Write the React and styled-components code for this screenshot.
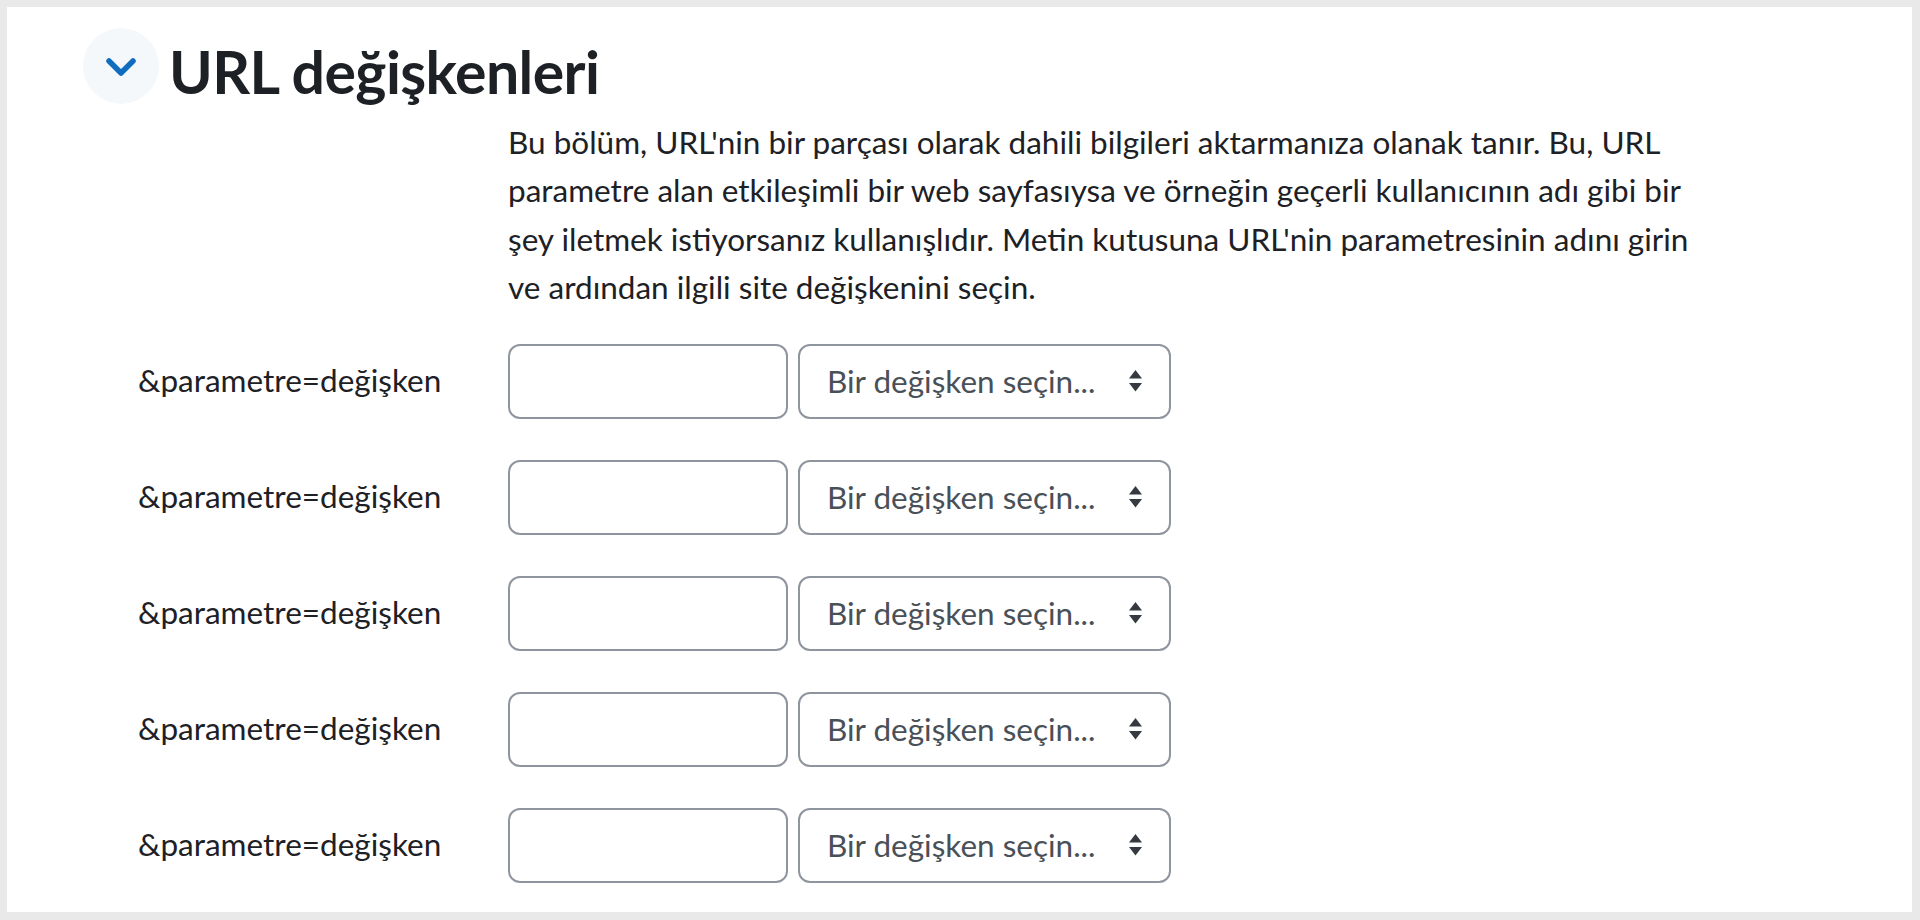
import React from "react";
import styled, { createGlobalStyle } from "styled-components";

const Global = createGlobalStyle`
  html, body { margin: 0; padding: 0; background: #e9e9e9; }
  body { font-family: Lato, "Open Sans", sans-serif; color: #1d2125; }
  * { box-sizing: border-box; }
`;

const Page = styled.div`
  width: 1920px;
  height: 920px;
  padding: 7px 8px 8px 7px;
`;

const Card = styled.section`
  background: #ffffff;
  height: 905px;
  padding: 21px 0 0 76px;
  display: flex;
  flex-direction: column;
`;

const Header = styled.div`
  display: flex;
  align-items: center;
  gap: 10px;
  height: 75px;
`;

const Toggle = styled.button`
  width: 76px;
  height: 76px;
  border-radius: 50%;
  border: none;
  background: #f5f8fb;
  display: flex;
  align-items: center;
  justify-content: center;
  padding: 0;
  padding-top: 4px;
`;

const Title = styled.h3`
  margin: 0;
  font-family: Lato, "Open Sans", sans-serif;
  font-weight: 700;
  font-size: 59px;
  line-height: 1;
  letter-spacing: -0.6px;
  color: #1d2125;
  padding-top: 12px;
`;

const Body = styled.div`
  display: grid;
  grid-template-columns: 370px auto;
  margin-left: 55px;
  margin-top: 15px;
  row-gap: 41px;
  align-items: center;
`;

const Description = styled.p`
  grid-column: 2;
  margin: 0 0 -9px 0;
  font-size: 31.5px;
  line-height: 48.4px;
  color: #1d2125;
  white-space: nowrap;
`;

const Label = styled.label`
  grid-column: 1;
  font-size: 31.5px;
  line-height: 48px;
  color: #1d2125;
  padding-bottom: 2px;
`;

const Controls = styled.div`
  grid-column: 2;
  display: flex;
  gap: 10px;
`;

const TextInput = styled.input`
  width: 280px;
  height: 75px;
  border: 2px solid #8f959e;
  border-radius: 12px;
  background: #fff;
  font-family: inherit;
  font-size: 31.5px;
  padding: 0 24px;
  outline: none;
`;

const Select = styled.div`
  width: 373px;
  height: 75px;
  border: 2px solid #8f959e;
  border-radius: 12px;
  background: #fff;
  display: flex;
  align-items: center;
  justify-content: space-between;
  padding: 0 27px 0 27px;
  font-size: 31.5px;
  color: #495057;
`;

const Chevron = () => (
  <svg width="30" height="20" viewBox="0 0 30 20">
    <path d="M3 3 L15 15 L27 3" fill="none" stroke="#0f6cbf" strokeWidth="5.5" strokeLinecap="round" strokeLinejoin="round" />
  </svg>
);

const UpDown = () => (
  <svg width="13" height="22" viewBox="0 0 13 22">
    <path d="M6.5 0 L13 8.5 L0 8.5 Z" fill="#343a40" />
    <path d="M0 13 L13 13 L6.5 21.5 Z" fill="#343a40" />
  </svg>
);

const rows = [0, 1, 2, 3, 4];

export default function App() {
  return (
    <>
      <Global />
      <Page>
        <Card>
          <Header>
            <Toggle aria-label="Daralt">
              <Chevron />
            </Toggle>
            <Title>URL değişkenleri</Title>
          </Header>
          <Body>
            <Description>
              Bu bölüm, URL'nin bir parçası olarak dahili bilgileri aktarmanıza olanak tanır. Bu, URL
              <br />
              parametre alan etkileşimli bir web sayfasıysa ve örneğin geçerli kullanıcının adı gibi bir
              <br />
              şey iletmek istiyorsanız kullanışlıdır. Metin kutusuna URL'nin parametresinin adını girin
              <br />
              ve ardından ilgili site değişkenini seçin.
            </Description>
            {rows.map((r) => (
              <React.Fragment key={r}>
                <Label>&amp;parametre=değişken</Label>
                <Controls>
                  <TextInput type="text" />
                  <Select>
                    <span>Bir değişken seçin...</span>
                    <UpDown />
                  </Select>
                </Controls>
              </React.Fragment>
            ))}
          </Body>
        </Card>
      </Page>
    </>
  );
}
